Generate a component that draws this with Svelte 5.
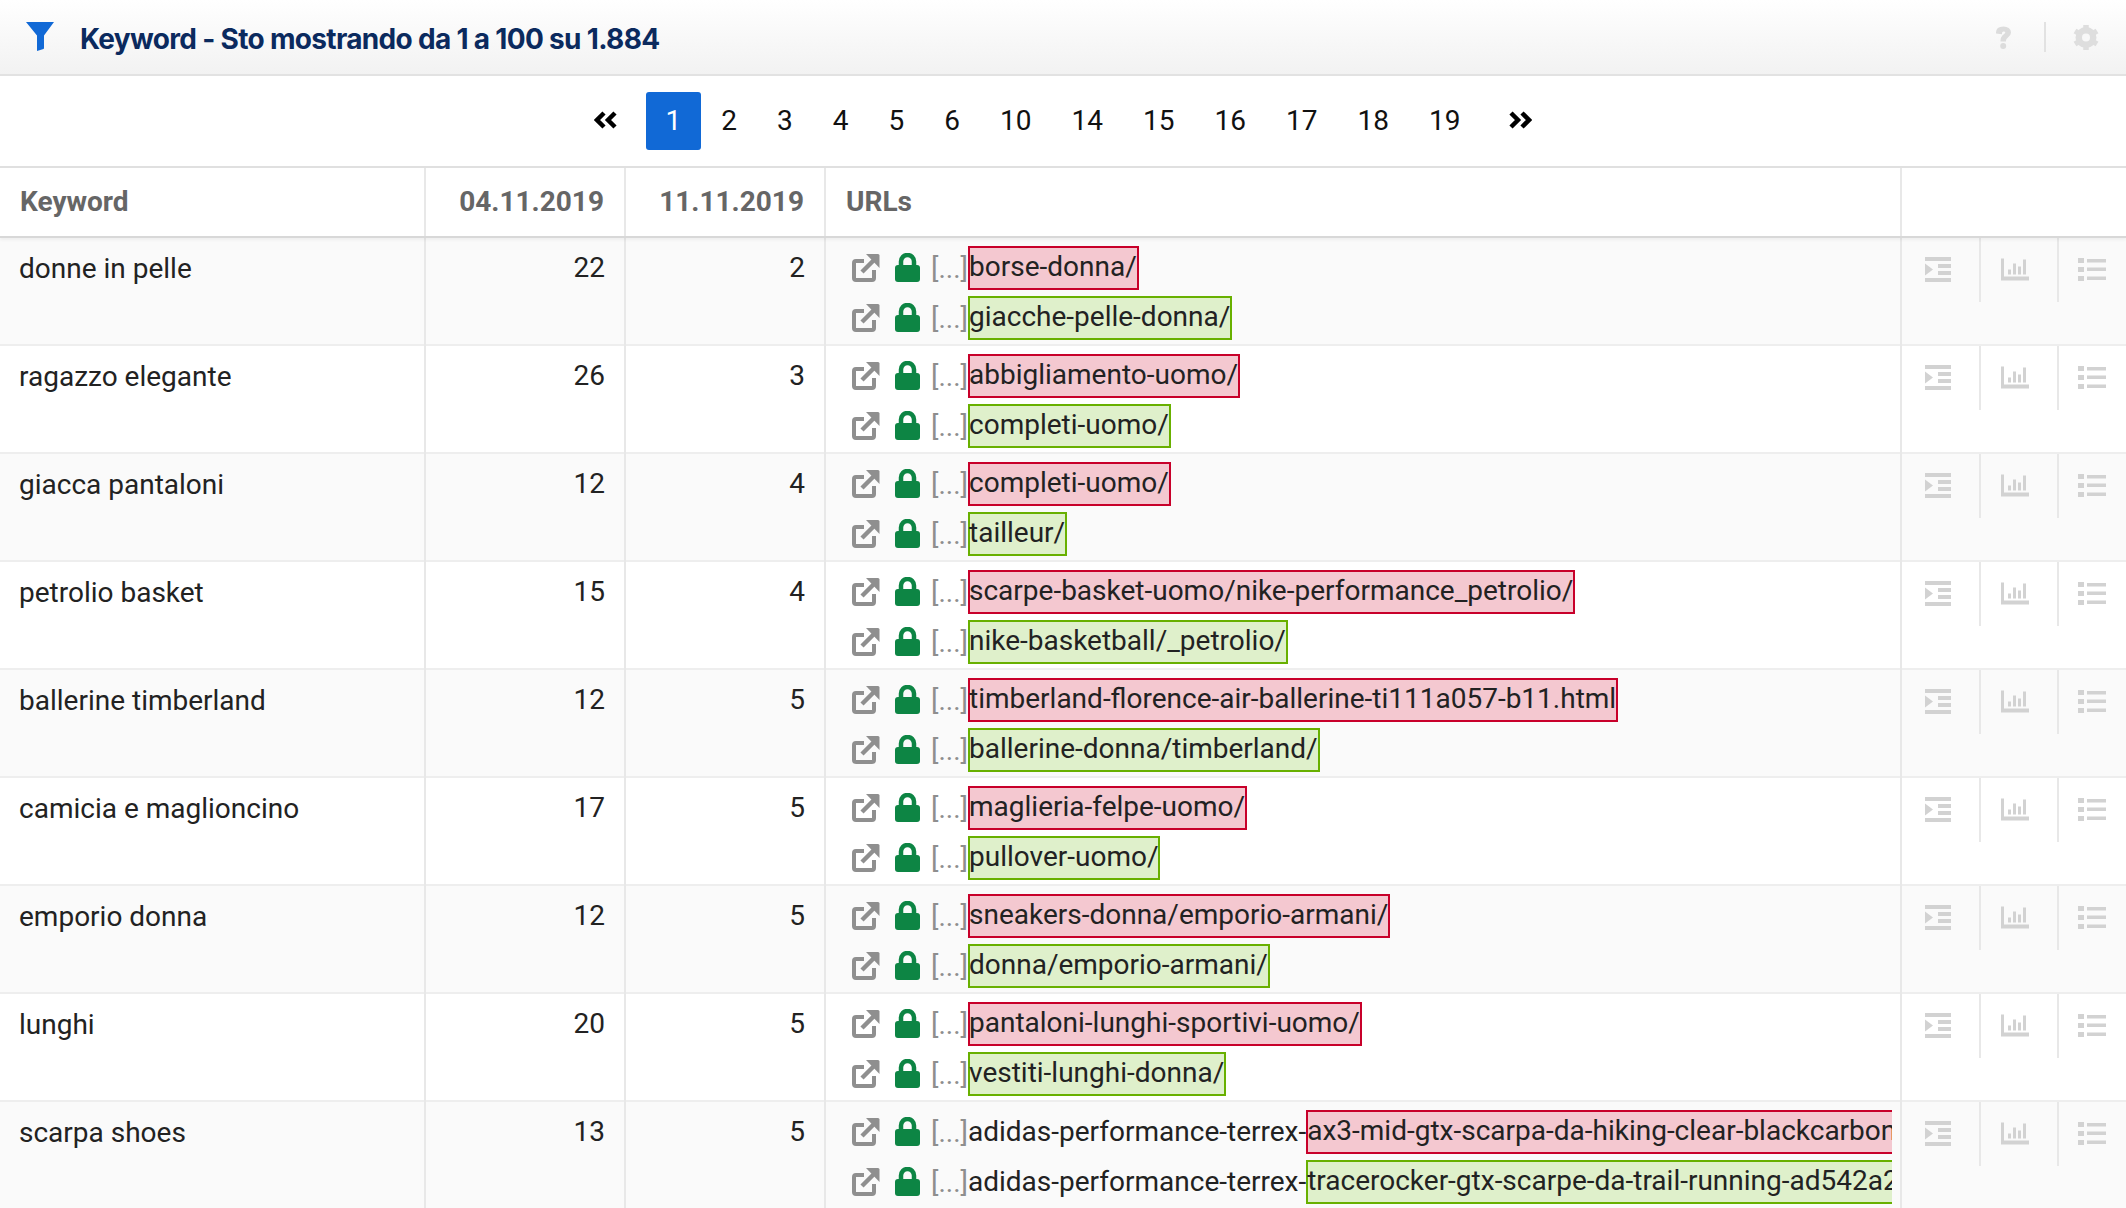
<script>
	const pages = ['2', '3', '4', '5', '6', '10', '14', '15', '16', '17', '18', '19'];

	const rows = [
		{ kw: 'donne in pelle', a: 22, b: 2, red: 'borse-donna/', green: 'giacche-pelle-donna/' },
		{ kw: 'ragazzo elegante', a: 26, b: 3, red: 'abbigliamento-uomo/', green: 'completi-uomo/' },
		{ kw: 'giacca pantaloni', a: 12, b: 4, red: 'completi-uomo/', green: 'tailleur/' },
		{ kw: 'petrolio basket', a: 15, b: 4, red: 'scarpe-basket-uomo/nike-performance_petrolio/', green: 'nike-basketball/_petrolio/' },
		{ kw: 'ballerine timberland', a: 12, b: 5, red: 'timberland-florence-air-ballerine-ti111a057-b11.html', green: 'ballerine-donna/timberland/' },
		{ kw: 'camicia e maglioncino', a: 17, b: 5, red: 'maglieria-felpe-uomo/', green: 'pullover-uomo/' },
		{ kw: 'emporio donna', a: 12, b: 5, red: 'sneakers-donna/emporio-armani/', green: 'donna/emporio-armani/' },
		{ kw: 'lunghi', a: 20, b: 5, red: 'pantaloni-lunghi-sportivi-uomo/', green: 'vestiti-lunghi-donna/' },
		{
			kw: 'scarpa shoes',
			a: 13,
			b: 5,
			prefix: 'adidas-performance-terrex-',
			red: 'ax3-mid-gtx-scarpa-da-hiking-clear-blackcarbon',
			green: 'tracerocker-gtx-scarpe-da-trail-running-ad542a2'
		}
	];
</script>

{#snippet urlLine(prefix, text, kind)}
	<div class="url-line">
		<svg class="ext" viewBox="0 0 28 29" aria-hidden="true">
			<path d="M22 17v8a2 2 0 0 1-2 2H4a2 2 0 0 1-2-2V10a2 2 0 0 1 2-2h8" fill="none" stroke="#8f8f8f" stroke-width="4" />
			<path d="M10 19 24 5" fill="none" stroke="#8f8f8f" stroke-width="4.5" />
			<path d="M14 1h12a1.500 1.500 0 0 1 1.500 1.500V15z" fill="#8f8f8f" />
		</svg>
		<svg class="lock" viewBox="0 0 25 29" aria-hidden="true">
			<path d="M6 13V8.500a6.500 6.500 0 0 1 13 0V13" fill="none" stroke="#0d8544" stroke-width="4.500" />
			<rect x="0" y="12" width="25" height="17" rx="3" fill="#0d8544" />
		</svg>
		<span class="dots">[...]</span>{#if prefix}<span class="prefix">{prefix}</span>{/if}<span class="chip {kind}">{text}</span>
	</div>
{/snippet}

<div class="page">
	<header class="top">
		<svg class="filter" viewBox="0 0 28 29" aria-hidden="true">
			<path d="M0 0h28L18 13.500V26a1 1 0 0 1-.5 1L11 29V13.500z" fill="#1169d6" />
		</svg>
		<h1>Keyword - Sto mostrando da 1 a 100 su 1.884</h1>
		<div class="tools">
			<svg class="help" viewBox="0 0 17 24" aria-hidden="true">
				<path d="M2 7.500C2 4 4.800 2.500 8.500 2.500s6.500 2 6.500 5c0 4.500-5 4-5 8H6.500c0-5.500 4.800-5 4.800-8 0-1.300-1.300-2-2.800-2S6 6.200 6 8z" fill="#dcdcdc" stroke="#dcdcdc" stroke-width="2" />
				<circle cx="8.200" cy="21" r="3" fill="#dcdcdc" />
			</svg>
			<span class="divider"></span>
			<svg class="gear" viewBox="0 0 26 27" aria-hidden="true">
				<circle cx="13" cy="13.500" r="7.500" fill="none" stroke="#dedede" stroke-width="6" />
				<path d="M13 1v25M2 7l22 13M24 7 2 20" stroke="#dedede" stroke-width="5.500" />
				<circle cx="13" cy="13.500" r="4" fill="#f8f8f8" />
			</svg>
		</div>
	</header>

	<nav class="pager">
		<span class="arrow">
			<svg viewBox="0 0 24 18" aria-hidden="true"><path d="M10 2 3 9l7 7M21 2l-7 7 7 7" fill="none" stroke="#000" stroke-width="4.500" /></svg>
		</span>
		<span class="num active"><span>1</span></span>
		{#each pages as p}
			<span class="num"><span>{p}</span></span>
		{/each}
		<span class="arrow">
			<svg viewBox="0 0 24 18" aria-hidden="true"><path d="M3 2l7 7-7 7M14 2l7 7-7 7" fill="none" stroke="#000" stroke-width="4.500" /></svg>
		</span>
	</nav>

	<div class="thead">
		<div class="cell">Keyword</div>
		<div class="cell right">04.11.2019</div>
		<div class="cell right">11.11.2019</div>
		<div class="cell urls-head">URLs</div>
		<div></div>
	</div>

	{#each rows as row}
		<div class="row">
			<div class="cell kw">{row.kw}</div>
			<div class="cell right val">{row.a}</div>
			<div class="cell right val">{row.b}</div>
			<div class="cell urls">
				{@render urlLine(row.prefix, row.red, 'red')}
				{@render urlLine(row.prefix, row.green, 'green')}
			</div>
			<div class="actions">
				<div class="action">
					<svg viewBox="0 0 26 25" aria-hidden="true">
						<path d="M0 0h26v4H0zM13 7h13v4H13zM13 14h13v4H13zM0 21h26v4H0zM0 6.500l8 6-8 6z" fill="#d2d2d2" />
					</svg>
				</div>
				<div class="action">
					<svg viewBox="0 0 28 22" aria-hidden="true">
						<path d="M0 0h3v18h25v4H0zM7 11h3v5H7zM12 5h3v11h-3zM17 8h3v8h-3zM22 1h3v15h-3z" fill="#d2d2d2" />
					</svg>
				</div>
				<div class="action">
					<svg viewBox="0 0 28 23" aria-hidden="true">
						<path d="M0 0h6v5H0zM0 9h6v5H0zM0 18h6v5H0zM9 1h19v3.500H9zM9 9.500h19V13H9zM9 18.500h19V22H9z" fill="#d2d2d2" />
					</svg>
				</div>
			</div>
		</div>
	{/each}
</div>

<style>
	:global(body) {
		margin: 0;
		background: #fff;
	}

	.page {
		height: 1208px;
		overflow: hidden;
		font-family: Roboto, sans-serif;
		font-size: 28px;
		color: #222;
	}

	.top {
		display: flex;
		align-items: center;
		height: 74px;
		padding: 0 27px 0 26px;
		border-bottom: 2px solid #e2e2e2;
		background: linear-gradient(#ffffff, #f2f2f2);
	}

	.filter {
		width: 28px;
		height: 29px;
		margin-right: 26px;
		margin-top: -1px;
	}

	h1 {
		margin: 4px 0 0;
		font-family: Inter, sans-serif;
		font-size: 28px;
		font-weight: 700;
		letter-spacing: -0.68px;
		color: #0b2a5e;
	}

	.tools {
		display: flex;
		align-items: center;
		margin-left: auto;
	}

	.help {
		width: 17px;
		height: 24px;
	}

	.divider {
		width: 2px;
		height: 30px;
		margin: 0 27px 0 32px;
		background: #e2e2e2;
	}

	.gear {
		width: 26px;
		height: 27px;
	}

	.pager {
		display: flex;
		justify-content: center;
		align-items: center;
		height: 90px;
		color: #111;
	}

	.num {
		display: flex;
		align-items: center;
		justify-content: center;
		height: 58px;
		padding: 0 20px;
		border-radius: 3px;
	}

	.num span {
		margin-bottom: 2px;
	}

	.active {
		background: #1169d6;
		color: #fff;
	}

	.arrow {
		display: flex;
		align-items: center;
		justify-content: center;
		width: 80px;
	}

	.arrow svg {
		width: 24px;
		height: 18px;
		margin-bottom: 2px;
	}

	.thead,
	.row {
		display: grid;
		grid-template-columns: 426px 200px 200px 1076px 1fr;
	}

	.thead {
		height: 72px;
		box-sizing: border-box;
		border-top: 2px solid #e0e0e0;
		border-bottom: 2px solid #d8d8d8;
		box-shadow: 0 2px 3px rgba(0, 0, 0, 0.05);
		position: relative;
		font-weight: 700;
		color: #666;
	}

	.thead .cell {
		display: flex;
		align-items: center;
		padding: 0 20px 2px;
	}

	.thead .right {
		justify-content: flex-end;
	}

	.thead .urls-head {
		padding-left: 20px;
	}

	.cell {
		box-sizing: border-box;
		border-right: 2px solid #e8e8e8;
		min-width: 0;
	}

	.row {
		height: 108px;
		box-sizing: border-box;
		border-bottom: 2px solid #eeeeee;
		background: #fff;
	}

	.row:nth-of-type(even) {
		background: #fafafa;
	}

	.kw,
	.val {
		padding: 14px 19px 0;
		line-height: 32px;
	}

	.kw {
		padding-top: 15px;
	}

	.right {
		text-align: right;
	}

	.urls {
		padding: 8px 8px 0 26px;
		white-space: nowrap;
	}

	.url-line {
		display: flex;
		align-items: center;
		height: 44px;
		margin-bottom: 6px;
		overflow: hidden;
	}

	.ext {
		flex: none;
		width: 28px;
		height: 29px;
		margin: -2px 15px 0 0;
	}

	.lock {
		flex: none;
		width: 25px;
		height: 29px;
		margin: -2px 11px 0 0;
	}

	.dots {
		color: #8e8e8e;
		width: 37px;
		flex: none;
	}

	.prefix {
		margin-bottom: 2px;
	}

	.chip {
		flex: none;
		box-sizing: border-box;
		height: 44px;
		line-height: 38px;
		text-indent: -1px;
		border: 2px solid;
	}

	.red {
		background: #f4c8d0;
		border-color: #c8002a;
	}

	.green {
		background: #dff0cb;
		border-color: #68b000;
	}

	.actions {
		display: flex;
		align-items: flex-start;
	}

	.action {
		box-sizing: border-box;
		display: flex;
		align-items: flex-start;
		height: 64px;
		padding: 19px 0 0 20px;
		width: 78px;
		border-right: 2px solid #e8e8e8;
	}

	.action:first-child {
		width: 79px;
		padding-left: 22px;
	}

	.action:last-child {
		border-right: none;
		width: 67px;
		padding-left: 19px;
	}

	.action svg {
		width: 28px;
		height: 25px;
	}
</style>
